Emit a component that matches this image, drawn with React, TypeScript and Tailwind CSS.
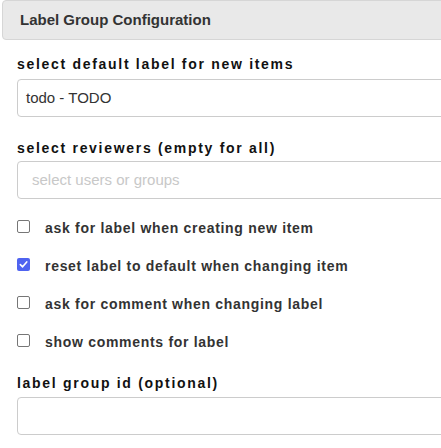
import React from "react";

const labelCls =
  "block text-[14px] font-bold tracking-[1.7px] text-[#111] leading-[16px]";

function Check({ checked, text }: { checked?: boolean; text: string }) {
  return (
    <div className="flex items-center h-[38px]">
      {checked ? (
        <span className="w-[13px] h-[13px] rounded-[2px] bg-[#4f63f0] flex items-center justify-center">
          <svg width="9" height="9" viewBox="0 0 10 10">
            <path d="M1.5 5.2 L4 7.6 L8.6 2.2" stroke="white" strokeWidth="1.8" fill="none" strokeLinecap="round" strokeLinejoin="round" />
          </svg>
        </span>
      ) : (
        <span className="w-[13px] h-[13px] rounded-[2px] border border-[#767676] bg-white" />
      )}
      <span className="ml-[15px] mt-[4px] text-[14px] font-bold tracking-[0.7px] text-[#333]">{text}</span>
    </div>
  );
}

export default function App() {
  return (
    <div
      className="w-[441px] h-[448px] overflow-hidden bg-white"
      style={{ fontFamily: '"Liberation Sans", Arial, sans-serif' }}
    >
      <div className="w-[480px]">
        <div className="ml-[2px] h-[40px] border border-[#d6d6d6] rounded-[4px] bg-[#e9e9e9] pl-[17px] flex items-center text-[15px] font-bold text-[#333]">
          Label Group Configuration
        </div>
        <div className="pl-[17px]">
          <div className="mt-[16px] h-[16px] flex items-center">
            <span className={labelCls}>select default label for new items</span>
          </div>
          <div className="mt-[7px] h-[38px] border border-[#cccccc] rounded-[4px] flex items-center pl-[8px] text-[15px] text-[#333]">
            todo - TODO
          </div>
          <div className="mt-[23px] h-[16px] flex items-center">
            <span className={labelCls}>select reviewers (empty for all)</span>
          </div>
          <div className="mt-[5px] h-[38px] border border-[#cccccc] rounded-[4px] flex items-center pl-[14px] text-[15px] text-[#c8c8c8]">
            select users or groups
          </div>
          <div className="mt-[8px]">
            <Check text="ask for label when creating new item" />
            <Check checked text="reset label to default when changing item" />
            <Check text="ask for comment when changing label" />
            <Check text="show comments for label" />
          </div>
          <div className="mt-[16px] h-[16px] flex items-center">
            <span className={labelCls}>label group id (optional)</span>
          </div>
          <div className="mt-[6px] h-[38px] border border-[#cccccc] rounded-[4px]" />
        </div>
      </div>
    </div>
  );
}
